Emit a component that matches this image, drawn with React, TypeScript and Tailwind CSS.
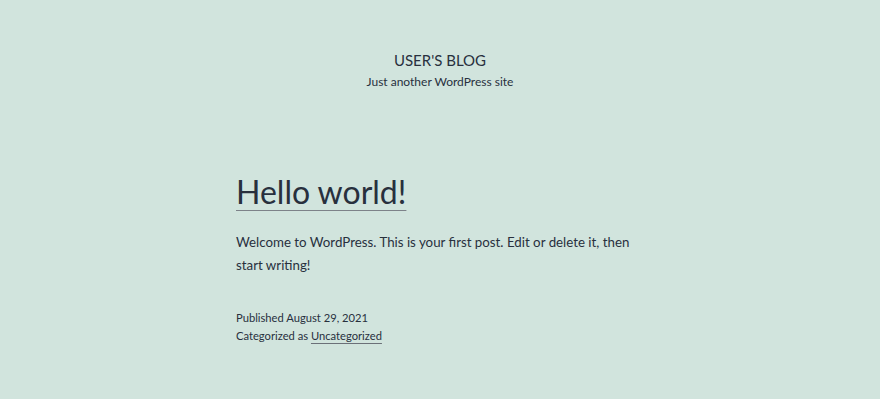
export default function App() {
  return (
    <div
      className="min-h-[399px] bg-[#d1e4dd] text-[#28303d]"
      style={{ fontFamily: 'Lato, "Noto Sans", sans-serif' }}
    >
      <header className="flex flex-col items-center pt-[50px]">
        <p className="text-[15px] leading-[20px] uppercase">User's Blog</p>
        <p className="mt-[3px] text-[12px] leading-[18px]">Just another WordPress site</p>
      </header>

      <main className="mx-auto mt-[81px] w-[408px]">
        <h1 className="text-[32px] leading-[40px]">
          <a href="#" className="underline decoration-1 underline-offset-[6px] decoration-[#7d8289]">
            Hello world!
          </a>
        </h1>
        <p className="mt-[19px] text-[13.3px] leading-[23px]">
          Welcome to WordPress. This is your first post. Edit or delete it, then start writing!
        </p>
        <footer className="mt-[32px] text-[11.2px] leading-[18px]">
          <p>Published August 29, 2021</p>
          <p>
            Categorized as{" "}
            <a href="#" className="underline decoration-1 underline-offset-[3px] decoration-[#6b7078]">
              Uncategorized
            </a>
          </p>
        </footer>
      </main>
    </div>
  )
}
